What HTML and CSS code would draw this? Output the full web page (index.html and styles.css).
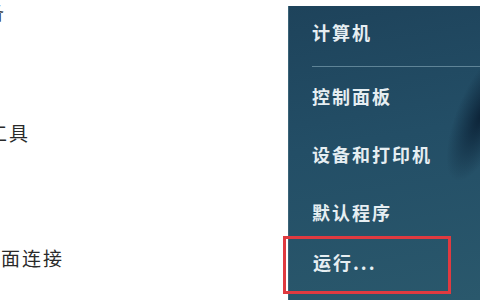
FILE: index.html
```html
<!DOCTYPE html>
<html lang="zh-CN">
<head>
    <meta charset="UTF-8">
    <title>开始菜单</title>
    <link rel="stylesheet" href="styles.css">
</head>
<body>
    <div class="desk">
        <!-- Left (white) column, clipped text -->
        <div class="left-col">
            <div class="left-item top">设备</div>
            <div class="left-item tools">管理工具</div>
            <div class="left-item remote">远程桌面连接</div>
        </div>

        <!-- Right (dark) column -->
        <div class="menu-panel">
            <div class="shade"></div>
            <div class="menu-item first">计算机</div>
            <div class="separator"></div>
            <div class="menu-item">控制面板</div>
            <div class="menu-item">设备和打印机</div>
            <div class="menu-item">默认程序</div>
            <div class="menu-item run">运行...</div>
        </div>
    </div>
</body>
</html>
```

FILE: styles.css
```css
body, html {
    margin: 0;
    padding: 0;
    width: 100%;
    height: 100%;
    background-color: #ffffff;
    overflow: hidden;
    font-family: "Noto Sans CJK SC", "Noto Sans", sans-serif;
}

.desk {
    display: flex;
    width: 480px;
    height: 300px;
}

.left-col {
    width: 288px;
    flex-shrink: 0;
    overflow: hidden;
    display: flex;
    flex-direction: column;
    color: #2a2a2a;
    font-size: 19px;
    letter-spacing: 2px;
    white-space: nowrap;
}

.left-item {
    line-height: 24px;
}

.left-item.top {
    margin-left: -36px;
    color: #3a4048;
}

.left-item.tools {
    margin-top: 97px;
    margin-left: -54px;
}

.left-item.remote {
    margin-top: 101px;
    margin-left: -62px;
}

.menu-panel {
    position: relative;
    flex: 1;
    margin-top: 6px;
    display: flex;
    flex-direction: column;
    background: linear-gradient(170deg, #1e435b 0%, #234e66 45%, #2a586c 100%);
    border-left: 1px solid #3b6478;
}

/* darker diagonal streak on the right edge */
.shade {
    position: absolute;
    right: -26px;
    top: 40px;
    width: 50px;
    height: 140px;
    background: radial-gradient(ellipse at center, rgba(8, 28, 48, 0.85) 0%, rgba(8, 28, 48, 0) 70%);
    transform: rotate(22deg);
}

.menu-item {
    position: relative;
    height: 58px;
    display: flex;
    align-items: center;
    padding-left: 23px;
    padding-bottom: 6px;
    box-sizing: border-box;
    color: #e6eef2;
    font-size: 18px;
    letter-spacing: 2px;
    font-weight: 700;
}

.separator {
    height: 1px;
    margin: 2px 0 3px 23px;
    background-color: #5f8497;
}

.menu-item.run {
    margin-top: -8px;
    margin-left: -6px;
    width: 168px;
    padding-left: 27px;
    height: 58px;
    border: 3px solid #e03a40;
}
```
